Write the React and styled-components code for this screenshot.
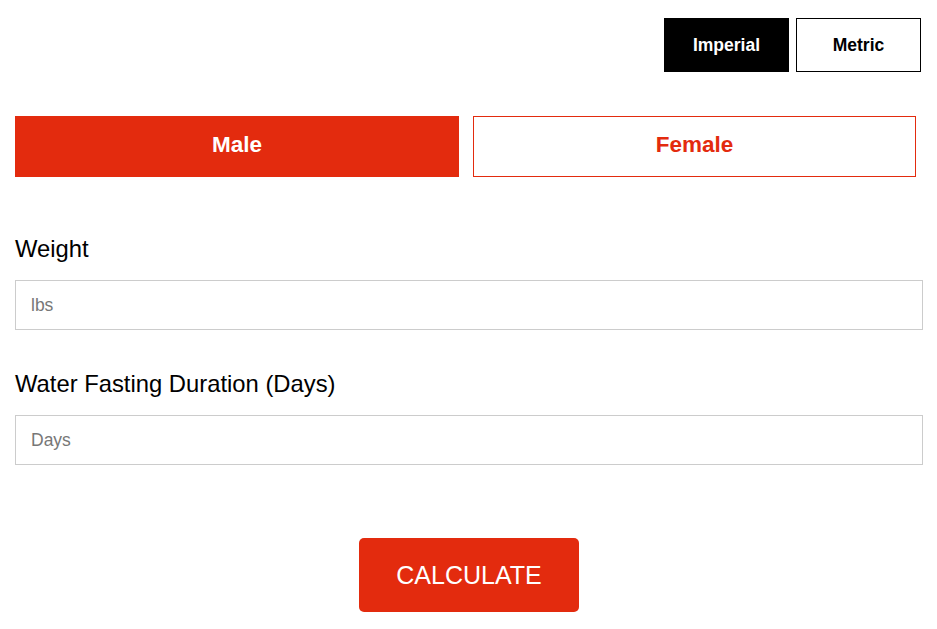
import React, { useState } from 'react';
import styled, { createGlobalStyle } from 'styled-components';

const RED = '#e32b0e';

const GlobalStyle = createGlobalStyle`
  body {
    margin: 0;
    background: #fff;
    font-family: "Liberation Sans", Arial, sans-serif;
  }
`;

const Page = styled.div`
  padding: 18px 14px 0 15px;
`;

const UnitRow = styled.div`
  display: flex;
  justify-content: flex-end;
  gap: 7px;
  padding-right: 2px;
`;

const UnitButton = styled.button`
  width: 125px;
  height: 54px;
  box-sizing: border-box;
  border: 1px solid #000;
  background: ${p => (p.$active ? '#000' : '#fff')};
  color: ${p => (p.$active ? '#fff' : '#000')};
  font-family: "Liberation Sans", Arial, sans-serif;
  font-weight: bold;
  font-size: 17.5px;
  padding: 0;
  cursor: pointer;
`;

const GenderRow = styled.div`
  display: grid;
  grid-template-columns: 444px 443px;
  gap: 14px;
  margin-top: 44px;
`;

const GenderButton = styled.button`
  height: 61px;
  box-sizing: border-box;
  border: 1px solid ${RED};
  background: ${p => (p.$active ? RED : '#fff')};
  color: ${p => (p.$active ? '#fff' : RED)};
  font-family: "Liberation Sans", Arial, sans-serif;
  font-weight: bold;
  font-size: 22.5px;
  padding: 0 0 3px 0;
  cursor: pointer;
`;

const Field = styled.div`
  margin-top: ${p => p.$top}px;
`;

const Label = styled.label`
  display: block;
  font-size: 23.8px;
  line-height: 26px;
  color: #000;
  margin-bottom: 18px;
`;

const Input = styled.input`
  display: block;
  width: 100%;
  height: 50px;
  box-sizing: border-box;
  border: 1px solid #ccc;
  padding: 0 15px;
  font-family: "Liberation Sans", Arial, sans-serif;
  font-size: 17.5px;
  color: #333;
  outline: none;
  &::placeholder {
    color: #777;
  }
`;

const Actions = styled.div`
  display: flex;
  justify-content: center;
  margin-top: 73px;
`;

const CalcButton = styled.button`
  width: 220px;
  height: 74px;
  border: none;
  border-radius: 5px;
  background: ${RED};
  color: #fff;
  font-family: "Liberation Sans", Arial, sans-serif;
  font-size: 25px;
  cursor: pointer;
`;

export default function App() {
  const [unit, setUnit] = useState('imperial');
  const [gender, setGender] = useState('male');

  return (
    <Page>
      <GlobalStyle />
      <UnitRow>
        <UnitButton $active={unit === 'imperial'} onClick={() => setUnit('imperial')}>Imperial</UnitButton>
        <UnitButton $active={unit === 'metric'} onClick={() => setUnit('metric')}>Metric</UnitButton>
      </UnitRow>
      <GenderRow>
        <GenderButton $active={gender === 'male'} onClick={() => setGender('male')}>Male</GenderButton>
        <GenderButton $active={gender === 'female'} onClick={() => setGender('female')}>Female</GenderButton>
      </GenderRow>
      <Field $top={59}>
        <Label>Weight</Label>
        <Input placeholder={unit === 'imperial' ? 'lbs' : 'kg'} />
      </Field>
      <Field $top={41}>
        <Label>Water Fasting Duration (Days)</Label>
        <Input placeholder="Days" />
      </Field>
      <Actions>
        <CalcButton>CALCULATE</CalcButton>
      </Actions>
    </Page>
  );
}
